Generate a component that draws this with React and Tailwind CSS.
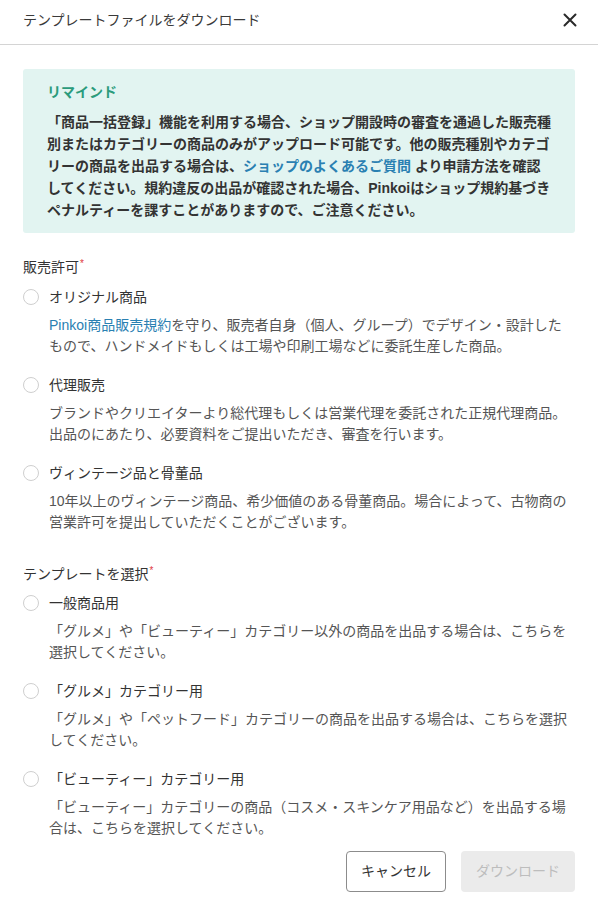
import React from "react";

function Radio() {
  return <span className="block w-4 h-4 rounded-full border border-[#cfcfcf] bg-white shrink-0" />;
}

function Option({ label, children }) {
  return (
    <div>
      <label className="flex items-center gap-[10px] h-[22px]">
        <Radio />
        <span className="text-[14px] leading-[22px] text-[#333]">{label}</span>
      </label>
      <p className="mt-[7px] pl-[26px] text-[14px] leading-[21px] text-[#555]">{children}</p>
    </div>
  );
}

function Title({ children }) {
  return (
    <div className="text-[14px] leading-[22px] text-[#333]">
      {children}
      <span className="text-[#e0393e] text-[10px] align-top relative top-[-3px] ml-[1px]">*</span>
    </div>
  );
}

export default function App() {
  return (
    <div
      className="min-h-screen bg-white [text-spacing-trim:space-all]"
      style={{ fontFamily: '"Liberation Sans", "Noto Sans CJK JP", sans-serif' }}
    >
      <header className="h-[45px] flex items-center justify-between px-[23px] pb-[5px] border-b border-[#d4d4d4]">
        <h1 className="text-[14px] leading-[22px] text-[#3a3a3a] font-normal">テンプレートファイルをダウンロード</h1>
        <svg width="14" height="14" viewBox="0 0 14 14" className="mr-[-2px]">
          <path d="M1.5 1.5 L12.5 12.5 M12.5 1.5 L1.5 12.5" stroke="#2a2a2a" strokeWidth="2" strokeLinecap="round" />
        </svg>
      </header>

      <div className="px-[23px]">
        <div className="mt-[24px] rounded-[3px] bg-[#e2f4f1] px-6 pt-3 pb-3">
          <div className="text-[14px] leading-[22px] font-bold text-[#2b9b7c]">リマインド</div>
          <p className="mt-2 text-[14px] leading-[22px] font-bold text-[#333]">
            「商品一括登録」機能を利用する場合、ショップ開設時の審査を通過した販売種別またはカテゴリーの商品のみがアップロード可能です。他の販売種別やカテゴリーの商品を出品する場合は、
            <span className="text-[#2a80b2]">ショップのよくあるご質問</span>
            {" "}より申請方法を確認してください。規約違反の出品が確認された場合、Pinkoiはショップ規約基づきペナルティーを課すことがありますので、ご注意ください。
          </p>
        </div>

        <div className="mt-[23px]">
          <Title>販売許可</Title>
          <div className="mt-2 flex flex-col gap-[17px]">
            <Option label="オリジナル商品">
              <span className="text-[#2a80b2]">Pinkoi商品販売規約</span>
              を守り、販売者自身（個人、グループ）でデザイン・設計したもので、ハンドメイドもしくは工場や印刷工場などに委託生産した商品。
            </Option>
            <Option label="代理販売">
              ブランドやクリエイターより総代理もしくは営業代理を委託された正規代理商品。出品のにあたり、必要資料をご提出いただき、審査を行います。
            </Option>
            <Option label="ヴィンテージ品と骨董品">
              10年以上のヴィンテージ商品、希少価値のある骨董商品。場合によって、古物商の営業許可を提出していただくことがございます。
            </Option>
          </div>
        </div>

        <div className="mt-[30px]">
          <Title>テンプレートを選択</Title>
          <div className="mt-[7px] flex flex-col gap-[17px]">
            <Option label="一般商品用">
              「グルメ」や「ビューティー」カテゴリー以外の商品を出品する場合は、こちらを選択してください。
            </Option>
            <Option label="「グルメ」カテゴリー用">
              「グルメ」や「ペットフード」カテゴリーの商品を出品する場合は、こちらを選択してください。
            </Option>
            <Option label="「ビューティー」カテゴリー用">
              「ビューティー」カテゴリーの商品（コスメ・スキンケア用品など）を出品する場合は、こちらを選択してください。
            </Option>
          </div>
        </div>

        <div className="mt-[12px] flex justify-end gap-[15px]">
          <button className="h-[41px] px-[14px] rounded-[4px] border border-[#8c8c8c] bg-white text-[14px] text-[#333]">
            キャンセル
          </button>
          <button className="h-[41px] px-[15px] rounded-[4px] bg-[#ebebeb] text-[14px] text-[#bdbdbd]">
            ダウンロード
          </button>
        </div>
      </div>
    </div>
  );
}
